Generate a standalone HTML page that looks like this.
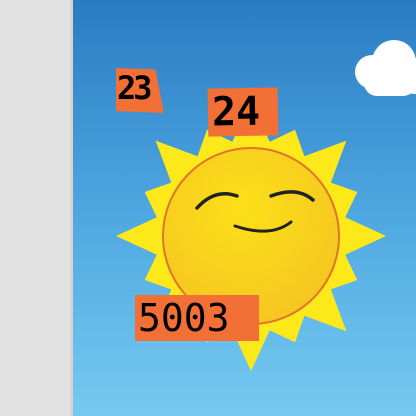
<!DOCTYPE html>
<html><head><style>
html,body{margin:0;padding:0;width:416px;height:416px;overflow:hidden;background:#e2e2e2}
.lab{position:absolute;background:#f26f35;color:#000;font-family:"DejaVu Sans Mono","Liberation Mono",monospace;font-weight:bold;line-height:1;box-sizing:border-box}
</style></head><body>
<div style="position:absolute;left:0;top:0;width:72px;height:416px;background:#e1e1e1"></div>
<div style="position:absolute;left:70px;top:0;width:3px;height:416px;background:#d9d3d0"></div>
<svg style="position:absolute;left:73px;top:0" width="343" height="416" viewBox="73 0 343 416">
<defs>
<linearGradient id="sky" x1="0" y1="0" x2="0" y2="1"><stop offset="0" stop-color="#2a7cc2"/><stop offset="0.5" stop-color="#4ea6e0"/><stop offset="1" stop-color="#76caf0"/></linearGradient>
<radialGradient id="face" cx="0.45" cy="0.35" r="0.7"><stop offset="0" stop-color="#fbe018"/><stop offset="1" stop-color="#f5c422"/></radialGradient>
</defs>
<rect x="73" y="0" width="343" height="416" fill="url(#sky)"/>
<g transform="translate(251,236)">
<polygon fill="#fde81a" points="135,0 94.2,18.7 106.3,44 79.8,53.4 95.4,95.4 53.4,79.8 44,106.3 18.7,94.2 0,135 -18.7,94.2 -44,106.3 -53.4,79.8 -95.4,95.4 -79.8,53.4 -106.3,44 -94.2,18.7 -135,0 -94.2,-18.7 -106.3,-44 -79.8,-53.4 -95.4,-95.4 -53.4,-79.8 -44,-106.3 -18.7,-94.2 0,-135 18.7,-94.2 44,-106.3 53.4,-79.8 95.4,-95.4 79.8,-53.4 106.3,-44 94.2,-18.7"/>
<circle r="88" fill="url(#face)" stroke="#e0752a" stroke-width="2"/>
<path d="M-54,-28 Q-36,-48 -14,-40" stroke="#222" stroke-width="3.5" fill="none" stroke-linecap="round"/>
<path d="M20,-40 Q46,-50 62,-36" stroke="#222" stroke-width="3.5" fill="none" stroke-linecap="round"/>
<path d="M-16,-10 Q20,2 40,-14" stroke="#222" stroke-width="3" fill="none" stroke-linecap="round"/>
</g>
<g fill="#fff"><circle cx="372" cy="72" r="17"/><circle cx="394" cy="62" r="22"/><circle cx="414" cy="76" r="18"/><rect x="364" y="70" width="52" height="26" rx="13"/></g>
</svg>
<div class="lab" style="left:116px;top:68px;width:48px;height:45px;font-size:32px;padding:4px 0 0 1px;clip-path:polygon(0 0,82% 3%,100% 100%,0 96%);letter-spacing:-3px">23</div>
<div class="lab" style="left:208px;top:88px;width:70px;height:48px;font-size:40px;padding:4px 0 0 4px;transform:rotate(-1deg)">24</div>
<div class="lab" style="left:135px;top:295px;width:124px;height:46px;font-size:38px;font-weight:normal;padding:4px 0 0 3px;">5003</div>
</body></html>
